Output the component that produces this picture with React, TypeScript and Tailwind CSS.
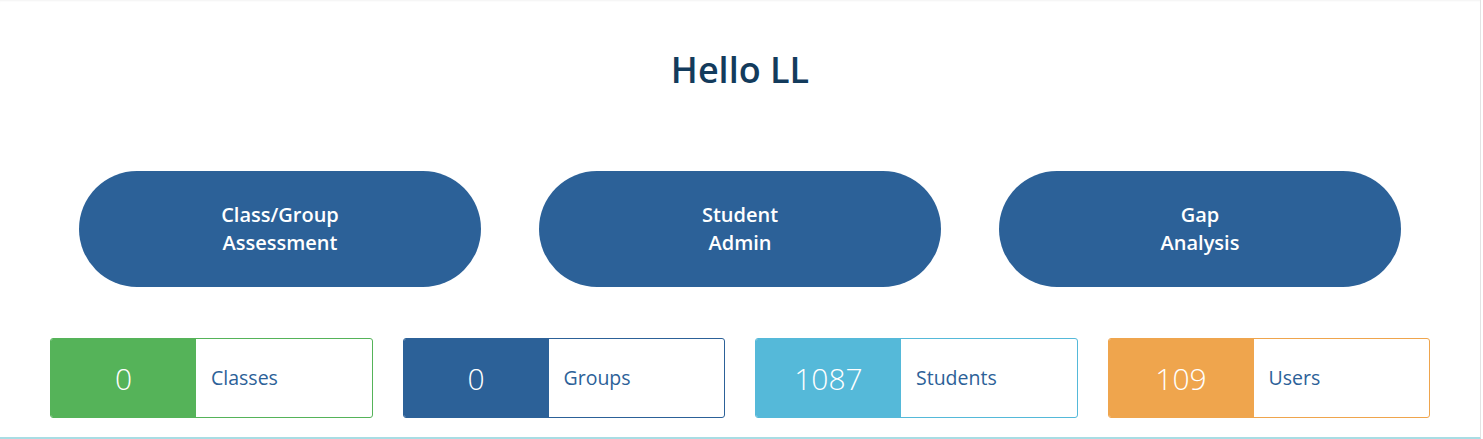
import React from 'react';

const actions = [
  ['Class/Group', 'Assessment'],
  ['Student', 'Admin'],
  ['Gap', 'Analysis'],
];

const stats = [
  { value: '0', label: 'Classes', fill: 'bg-[#55b359]', border: 'border-[#55b359]' },
  { value: '0', label: 'Groups', fill: 'bg-[#2c6198]', border: 'border-[#2c6198]' },
  { value: '1087', label: 'Students', fill: 'bg-[#55b9d9]', border: 'border-[#55b9d9]' },
  { value: '109', label: 'Users', fill: 'bg-[#efa54d]', border: 'border-[#efa54d]' },
];

const App: React.FC = () => {
  return (
    <div className="bg-white" style={{ fontFamily: '"Open Sans", "Noto Sans", sans-serif' }}>
      <div className="w-[1481px] h-[439px] border-r border-[#e3e3e3] border-b-2 border-b-[#a9dde4] shadow-[inset_0_2px_2px_-1px_rgba(0,0,0,0.05)] flex flex-col items-center">
        <h1 className="mt-[46px] text-[36px] leading-[48px] font-semibold text-[#133b5c]">Hello LL</h1>

        <div className="mt-[77px] flex gap-[58px]">
          {actions.map((lines) => (
            <button
              key={lines[0]}
              className="w-[402px] h-[116px] rounded-full bg-[#2c6198] text-white text-[20px] leading-[28px] font-semibold flex flex-col items-center justify-center"
            >
              {lines.map((l) => (
                <span key={l}>{l}</span>
              ))}
            </button>
          ))}
        </div>

        <div className="mt-[51px] flex gap-[30px]">
          {stats.map((s) => (
            <div key={s.label} className={`w-[322.5px] h-[80px] flex rounded-[3px] border ${s.border} overflow-hidden`}>
              <div className={`w-[145px] ${s.fill} flex items-center justify-center text-white text-[30px] font-light`}>
                {s.value}
              </div>
              <div className="flex-1 flex items-center pl-[15px] text-[19.5px] text-[#2c6198]">{s.label}</div>
            </div>
          ))}
        </div>
      </div>
    </div>
  );
};

export default App;
